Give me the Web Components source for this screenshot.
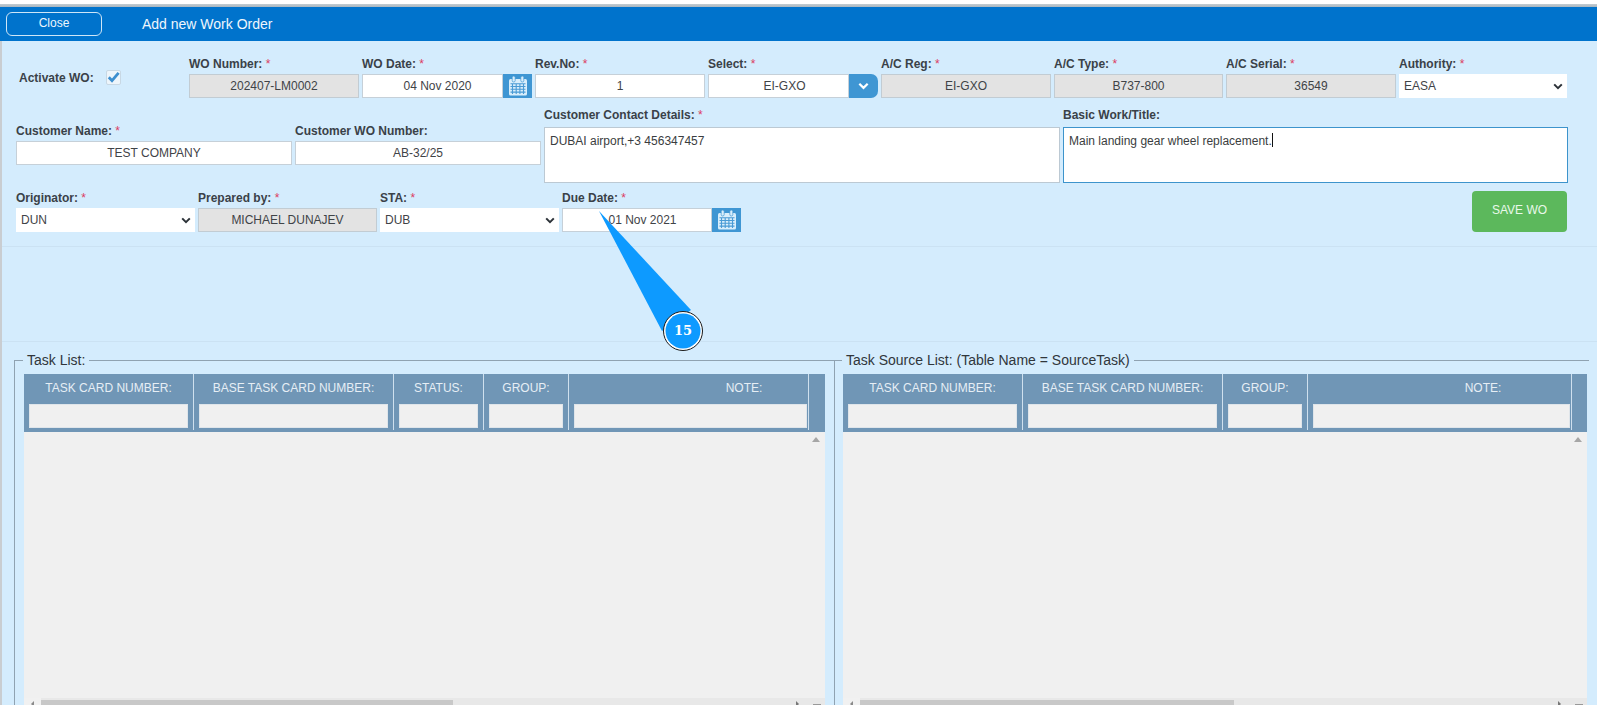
<!DOCTYPE html>
<html>
<head>
<meta charset="utf-8">
<title>Add new Work Order</title>
<style>
  html, body { margin: 0; height: 705px; overflow: hidden; background: #fff; }
  body { font: 12px "Liberation Sans", Arial, sans-serif; color: #3a3f44; }
</style>
</head>
<body>

<wo-page>
  <wo-header slot="header">Add new Work Order</wo-header>

  <wo-row slot="top" cols="170px 170px 170px 170px 170px 169px 170px 168px" start="19" first="167">
    <wo-activate></wo-activate>
    <wo-field label="WO Number:" required type="readonly">202407-LM0002</wo-field>
    <wo-field label="WO Date:" required type="date" style="--pl:10px">04 Nov 2020</wo-field>
    <wo-field label="Rev.No:" required>1</wo-field>
    <wo-field label="Select:" required type="combo" style="--pl:12px">EI-GXO</wo-field>
    <wo-field label="A/C Reg:" required type="readonly">EI-GXO</wo-field>
    <wo-field label="A/C Type:" required type="readonly">B737-800</wo-field>
    <wo-field label="A/C Serial:" required type="readonly">36549</wo-field>
    <wo-field label="Authority:" required type="select">EASA</wo-field>
  </wo-row>

  <wo-row slot="top" cols="276px 246px 516px 505px" start="16" class="second">
    <wo-field label="Customer Name:" required style="margin-top:16px">TEST COMPANY</wo-field>
    <wo-field label="Customer WO Number:" style="margin-top:16px">AB-32/25</wo-field>
    <wo-field label="Customer Contact Details:" required type="area">DUBAI airport,+3 456347457</wo-field>
    <wo-field label="Basic Work/Title:" type="area" focused>Main landing gear wheel replacement.</wo-field>
  </wo-row>

  <wo-row slot="top" cols="179px 179px 179px 179px 1fr" start="16" class="third">
    <wo-field label="Originator:" required type="select">DUN</wo-field>
    <wo-field label="Prepared by:" required type="readonly">MICHAEL DUNAJEV</wo-field>
    <wo-field label="STA:" required type="select">DUB</wo-field>
    <wo-field label="Due Date:" required type="date" style="--pl:11px">01 Nov 2021</wo-field>
    <wo-save>SAVE WO</wo-save>
  </wo-row>

  <task-panel slot="lists" legend="Task List:" style="width:820px" pad="9" first>
    <task-table thumb="17,412" track="801">
      <task-col style="width:170px">TASK CARD NUMBER:</task-col>
      <task-col style="width:200px">BASE TASK CARD NUMBER:</task-col>
      <task-col style="width:90px">STATUS:</task-col>
      <task-col style="width:85px">GROUP:</task-col>
      <task-col style="width:240px;--note:107px;--pr:1px">NOTE:</task-col>
    </task-table>
  </task-panel>

  <task-panel slot="lists" legend="Task Source List: (Table Name = SourceTask)" style="width:755px" pad="8">
    <task-table thumb="17,374" track="744">
      <task-col style="width:180px">TASK CARD NUMBER:</task-col>
      <task-col style="width:200px">BASE TASK CARD NUMBER:</task-col>
      <task-col style="width:85px">GROUP:</task-col>
      <task-col style="width:264px;--note:83px;--pr:1px">NOTE:</task-col>
    </task-table>
  </task-panel>

  <wo-callout slot="over">15</wo-callout>
</wo-page>

<script>
const calendarIcon = `
<svg width="22" height="22" viewBox="0 0 22 22">
  <rect x="2" y="4" width="18" height="16.500" rx="1.500" fill="#d9eefb"/>
  <rect x="5.200" y="1" width="3" height="6" rx="1.500" fill="#d9eefb" stroke="#3f96d3" stroke-width=".7"/>
  <rect x="13.800" y="1" width="3" height="6" rx="1.500" fill="#d9eefb" stroke="#3f96d3" stroke-width=".7"/>
  <path stroke="#4a9bd5" stroke-width="1.100" fill="none" d="M3.500 8.700h15M3.500 11.500h15M3.500 14.300h15M3.500 17.100h15M5.500 8.200v10.800M9.200 8.200v10.800M12.900 8.200v10.800M16.500 8.200v10.800"/>
</svg>`;

const chevron = (color, w, h) => `
<svg width="${w}" height="${h}" viewBox="0 0 10 7"><path d="M1.200 1.400 5 5.200 8.800 1.400" fill="none" stroke="${color}" stroke-width="2"/></svg>`;

class WoPage extends HTMLElement {
  constructor() {
    super();
    this.attachShadow({ mode: 'open' }).innerHTML = `
    <style>
      :host { display: block; position: relative; height: 705px; overflow: hidden; padding-top: 4px; box-sizing: border-box; }
      .rule { height: 3px; background: linear-gradient(#c3ccd2, #a9b6bf); }
      .panel { background: #d4ecfd; border-left: 2px solid #c9cdd1; height: 664px; box-sizing: border-box; overflow: hidden; }
      .top { height: 206px; padding-top: 16px; box-sizing: border-box; border-bottom: 1px solid #cbe2f3; margin-left: -2px; }
      .gap { height: 94px; border-bottom: 1px solid #cbe2f3; }
      .lists { display: flex; align-items: flex-start; padding: 11px 0 0 12px; }
    </style>
    <div class="rule"></div>
    <slot name="header"></slot>
    <div class="panel">
      <div class="top"><slot name="top"></slot></div>
      <div class="gap"></div>
      <div class="lists"><slot name="lists"></slot></div>
    </div>
    <slot name="over"></slot>`;
  }
}

class WoHeader extends HTMLElement {
  constructor() {
    super();
    this.attachShadow({ mode: 'open' }).innerHTML = `
    <style>
      :host { display: flex; align-items: center; height: 34px; background: #0073cc; color: #eef6fc; font-size: 14px; padding-left: 6px; box-sizing: border-box; }
      .close { width: 96px; height: 24px; box-sizing: border-box; border: 1px solid #cfe6f7; border-radius: 6px; font-size: 12px; line-height: 20px; text-align: center; margin: 0 40px 0 0; }
    </style>
    <div class="close">Close</div>
    <slot></slot>`;
  }
}

class WoRow extends HTMLElement {
  constructor() {
    super();
    const first = this.getAttribute('first');
    const cols = (first ? first + 'px ' : '') + this.getAttribute('cols');
    this.attachShadow({ mode: 'open' }).innerHTML = `
    <style>
      :host { display: block; }
      :host(.second) { margin-top: 10px; }
      :host(.third) { margin-top: 8px; }
      .grid { display: grid; grid-template-columns: ${cols}; column-gap: 3px; padding-left: ${this.getAttribute('start')}px; }
    </style>
    <div class="grid"><slot></slot></div>`;
  }
}

class WoActivate extends HTMLElement {
  constructor() {
    super();
    this.attachShadow({ mode: 'open' }).innerHTML = `
    <style>
      :host { display: flex; align-items: center; font-weight: bold; color: #3a4148; }
      .box { width: 15px; height: 15px; margin-left: 12px; margin-top: -1px; box-sizing: border-box; background: #edf5fb; border: 1px solid #c8d8e4; border-radius: 2px; position: relative; }
      svg { display: block; position: absolute; left: -1px; top: -1px; }
    </style>
    <span>Activate WO:</span>
    <span class="box"><svg width="15" height="15" viewBox="0 0 15 15"><path d="M2.800 7.200 6 10.600 12.600 2.800" fill="none" stroke="#3d8fcf" stroke-width="2.800"/></svg></span>`;
  }
}

class WoField extends HTMLElement {
  constructor() {
    super();
    const type = this.getAttribute('type') || 'text';
    const req = this.hasAttribute('required') ? ' <span class="star">*</span>' : '';
    const focused = this.hasAttribute('focused');
    let extra = '';
    if (type === 'date') extra = `<div class="addon">${calendarIcon}</div>`;
    if (type === 'combo') extra = `<div class="addon combo">${chevron('#fff', 11, 8)}</div>`;
    if (type === 'select') extra = `<div class="arrow">${chevron('#2c3238', 10, 7)}</div>`;
    this.attachShadow({ mode: 'open' }).innerHTML = `
    <style>
      :host { display: block; min-width: 0; }
      .label { height: 14px; line-height: 14px; font-weight: bold; color: #3a4148; white-space: nowrap; margin-bottom: 3px; }
      .star { color: #dc3b62; font-weight: normal; }
      .wrap { display: flex; height: 24px; position: relative; }
      .input { flex: 1; min-width: 0; box-sizing: border-box; background: #fff; border: 1px solid #c6d0d8; line-height: 22px; text-align: center; padding-left: var(--pl, 0); white-space: nowrap; color: #3f4347; }
      .readonly .input { background: #e3e3e3; border-color: #c2ccd3; }
      .select .input { text-align: left; padding-left: 4px; border-color: #fff; }
      .arrow { position: absolute; right: 4px; top: 9px; display: flex; }
      .addon { width: 29px; flex: none; background: #3f96d3; display: flex; align-items: center; justify-content: center; }
      .combo { border-radius: 0 7px 7px 0; }
      .area .label { margin-bottom: 5px; }
      .area .wrap { height: 56px; }
      .area .input { text-align: left; padding: 5px 5px; line-height: 16px; border-color: #bcc9d3; color: #3a3d40; }
      .focused .input { border-color: #3d94cc; }
      .caret { display: inline-block; width: 1px; height: 14px; background: #111; vertical-align: -2px; }
    </style>
    <div class="${type}${focused ? ' focused' : ''}">
      <div class="label">${this.getAttribute('label')}${req}</div>
      <div class="wrap">
        <div class="input"><slot></slot>${focused ? '<span class="caret"></span>' : ''}</div>
        ${extra}
      </div>
    </div>`;
  }
}

class WoSave extends HTMLElement {
  constructor() {
    super();
    this.attachShadow({ mode: 'open' }).innerHTML = `
    <style>
      :host { display: flex; align-items: center; justify-content: center; justify-self: end; width: 95px; height: 41px; background: #5cb85c; color: #e9f8ea; border-radius: 4px; margin: 0 30px 0 0; padding-bottom: 4px; box-sizing: border-box; }
    </style>
    <slot></slot>`;
  }
}

class TaskPanel extends HTMLElement {
  constructor() {
    super();
    const first = this.hasAttribute('first');
    this.attachShadow({ mode: 'open' }).innerHTML = `
    <style>
      :host { display: block; flex: none; }
      fieldset { margin: 0; min-width: 0; border: 0; border-top: 1px solid #8fa2b1; border-left: 1px solid #8fa2b1; padding: 6px 0 0 ${this.getAttribute('pad')}px; }
      legend { font-size: 14px; line-height: 15px; color: #30363b; padding: 0 4px; margin-left: ${first ? -1 : -1}px; }
    </style>
    <fieldset>
      <legend>${this.getAttribute('legend')}</legend>
      <slot></slot>
    </fieldset>`;
  }
}

class TaskTable extends HTMLElement {
  constructor() {
    super();
    const [arrow, thumb] = this.getAttribute('thumb').split(',');
    this.attachShadow({ mode: 'open' }).innerHTML = `
    <style>
      :host { display: block; width: ${this.getAttribute('track')}px; background: #f0f0f0; }
      .head { display: flex; height: 58px; background: #7096b6; }
      .body { height: 266px; display: flex; justify-content: flex-end; }
      .up { margin: 5px 5px 0 0; display: block; }
      .bar { display: flex; height: 17px; background: #e8e8e8; position: relative; }
      .end { width: ${arrow}px; background: #f1f1f1; position: relative; }
      .end::after { content: ""; position: absolute; left: 7px; top: 3px; border: 3px solid transparent; border-right-color: #8a8a8a; border-left: 0; }
      .thumb { width: ${thumb}px; margin-top: 2px; background: #c8c8c8; }
      .right { position: absolute; right: 26px; top: 3px; border: 3px solid transparent; border-left-color: #777; border-right: 0; }
      .corner { position: absolute; right: 4px; top: 6px; width: 8px; height: 1px; background: #999; }
    </style>
    <div class="head"><slot></slot></div>
    <div class="body"><svg class="up" width="8" height="5" viewBox="0 0 8 5"><path d="M4 0 8 5H0z" fill="#a6a6a6"/></svg></div>
    <div class="bar"><div class="end"></div><div class="thumb"></div><div class="right"></div><div class="corner"></div></div>`;
  }
}

class TaskCol extends HTMLElement {
  constructor() {
    super();
    this.attachShadow({ mode: 'open' }).innerHTML = `
    <style>
      :host { display: block; flex: none; box-sizing: border-box; height: 56px; padding: 0 var(--pr, 5px) 0 5px; border-right: 1px solid #cfe0ee; color: #e6eef5; }
      .title { height: 15px; line-height: 15px; margin-top: 7px; text-align: center; white-space: nowrap; padding-left: var(--note, 0); }
      .filter { height: 24px; margin-top: 8px; background: #f0f0f0; box-sizing: border-box; border: 1px solid #dfe5ea; }
    </style>
    <div class="title"><slot></slot></div>
    <div class="filter"></div>`;
  }
}

class WoCallout extends HTMLElement {
  constructor() {
    super();
    this.attachShadow({ mode: 'open' }).innerHTML = `
    <style>
      :host { position: absolute; left: 590px; top: 205px; width: 120px; height: 150px; display: block; }
      svg { position: absolute; left: 0; top: 0; }
      .num { position: absolute; left: 73px; top: 116px; width: 40px; height: 20px; text-align: center; color: #fff; font: bold 13px/20px "DejaVu Serif", serif; }
    </style>
    <svg width="120" height="150" viewBox="590 205 120 150">
      <path d="M599 211 662 331 691 310z" fill="#0d9aff"/>
      <circle cx="683" cy="331" r="19.500" fill="#fff" stroke="#1a1a1a" stroke-width="1"/>
      <circle cx="683" cy="331" r="17.500" fill="#0d9aff"/>
    </svg>
    <div class="num"><slot></slot></div>`;
  }
}

customElements.define('wo-page', WoPage);
customElements.define('wo-header', WoHeader);
customElements.define('wo-row', WoRow);
customElements.define('wo-activate', WoActivate);
customElements.define('wo-field', WoField);
customElements.define('wo-save', WoSave);
customElements.define('task-panel', TaskPanel);
customElements.define('task-table', TaskTable);
customElements.define('task-col', TaskCol);
customElements.define('wo-callout', WoCallout);
</script>
</body>
</html>
